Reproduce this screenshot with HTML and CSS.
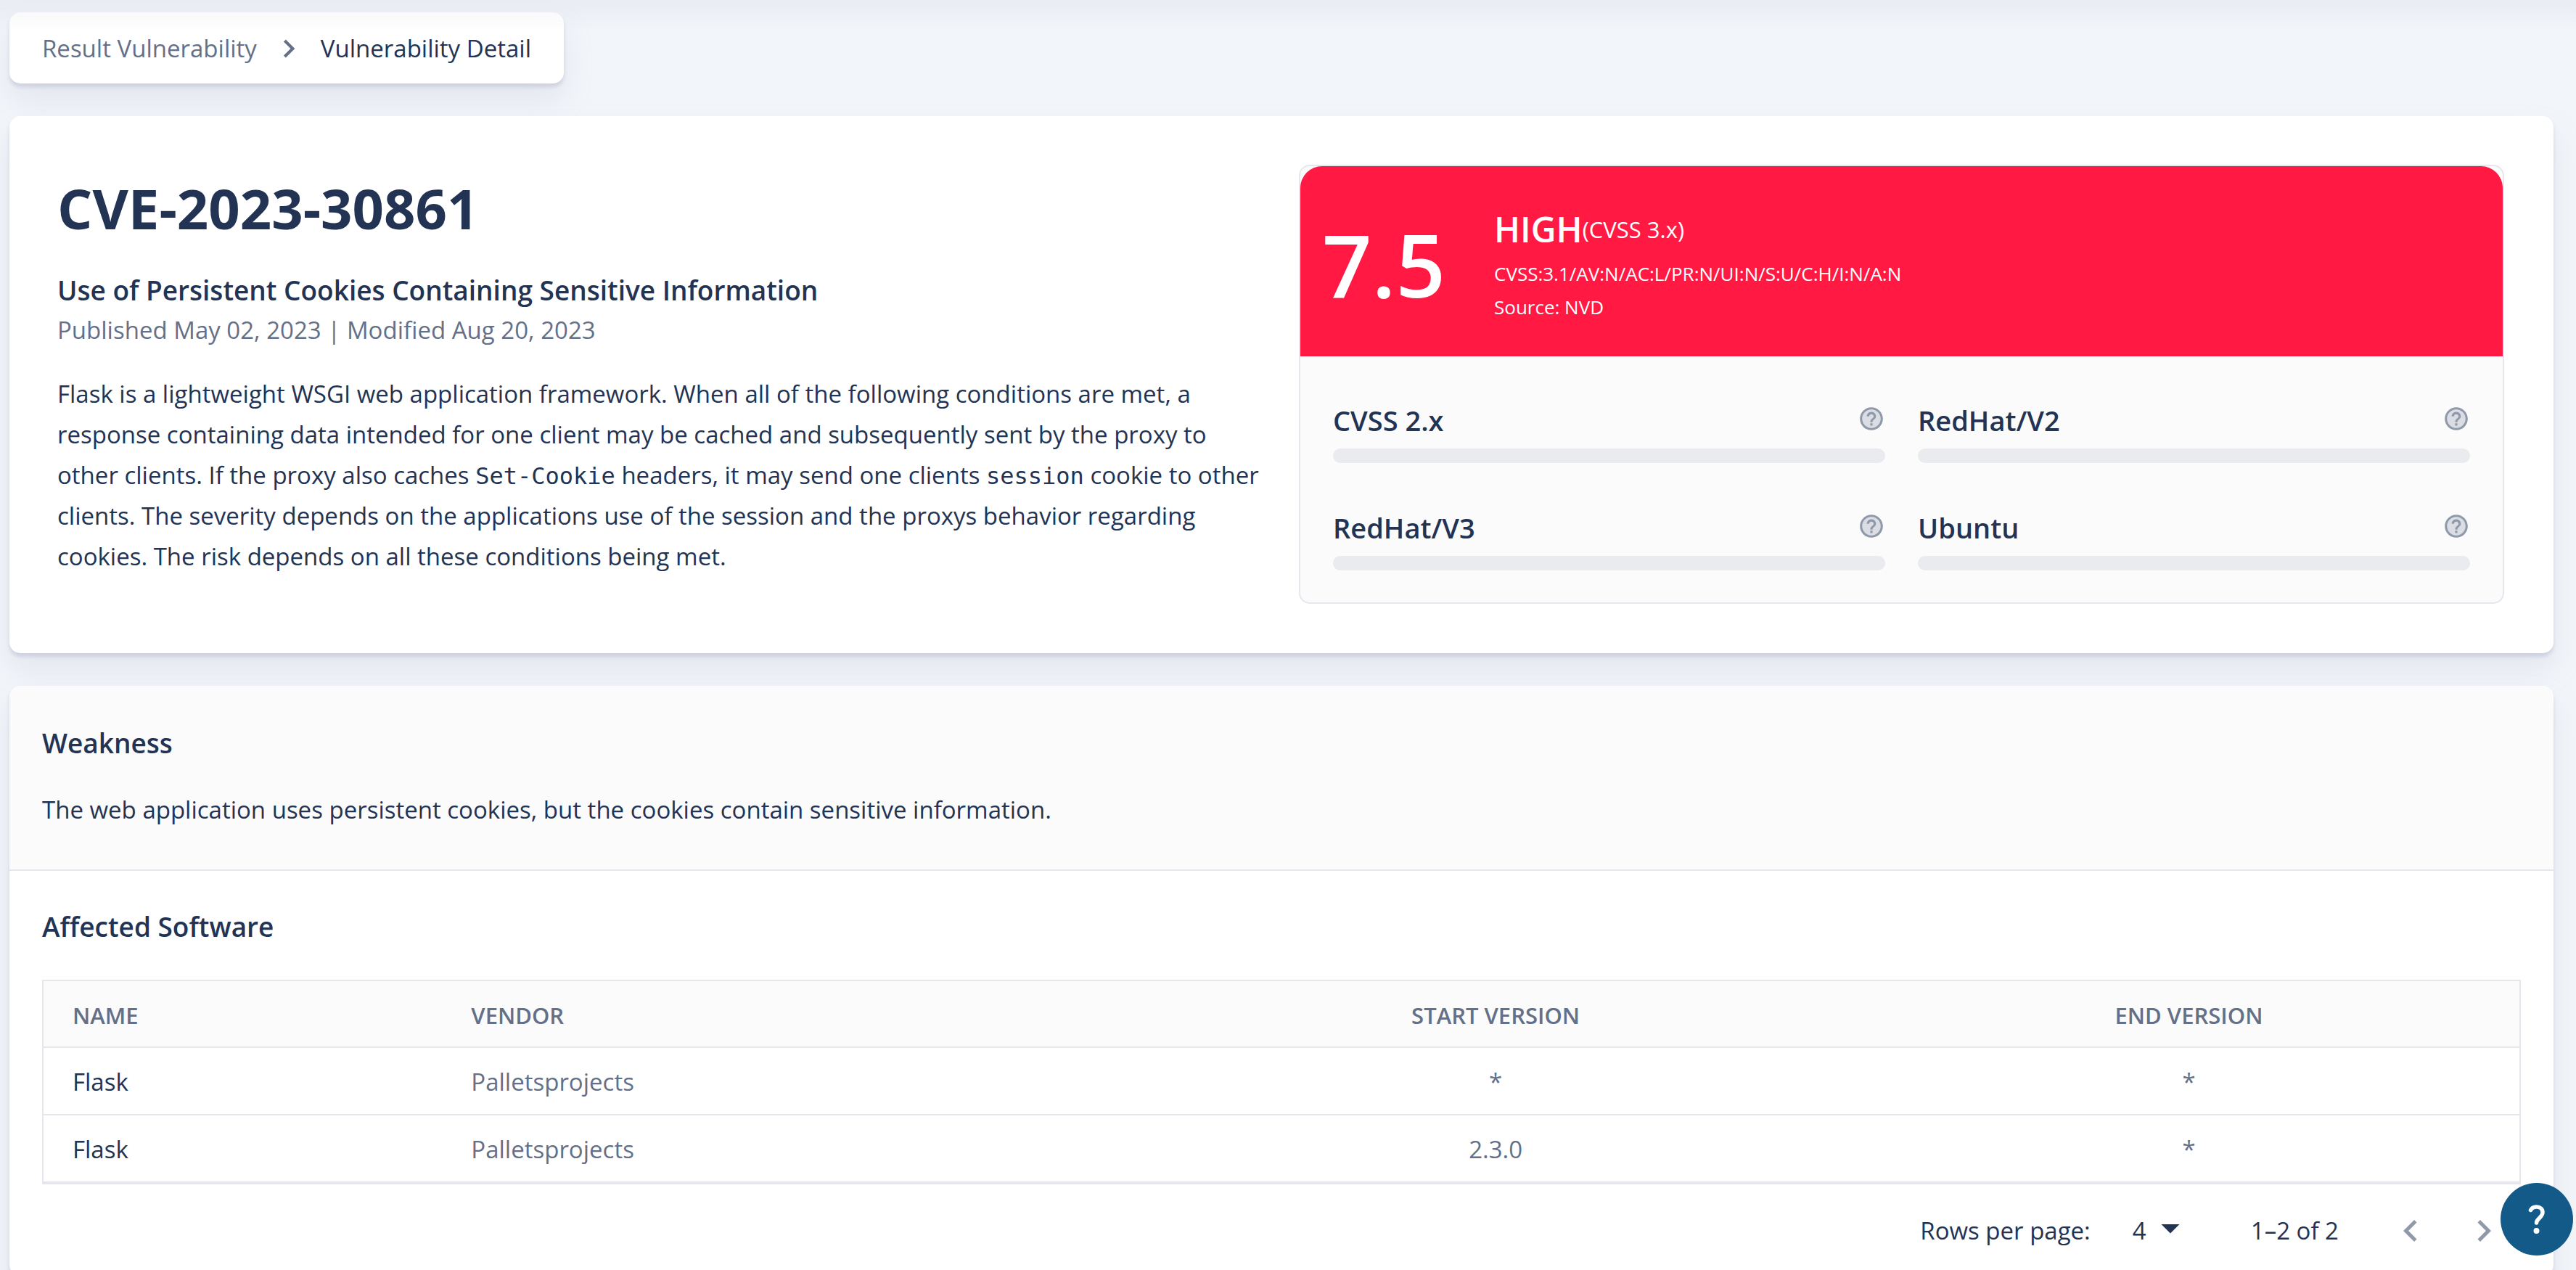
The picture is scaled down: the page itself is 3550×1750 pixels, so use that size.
FILE: index.html
```html
<!DOCTYPE html>
<html lang="en">
<head>
<meta charset="utf-8">
<meta name="viewport" content="width=device-width, initial-scale=1">
<title>Vulnerability Detail</title>
<link rel="stylesheet" href="styles.css">
</head>
<body>
<svg class="sprite" aria-hidden="true">
  <symbol id="chevron-right" viewBox="0 0 24 24"><path d="M10 6 8.59 7.41 13.17 12l-4.58 4.59L10 18l6-6z"/></symbol>
  <symbol id="chevron-left" viewBox="0 0 24 24"><path d="M15.41 16.59 10.83 12l4.58-4.59L14 6l-6 6 6 6z"/></symbol>
  <symbol id="drop-down" viewBox="0 0 24 24"><path d="m7 10 5 5 5-5z"/></symbol>
  <symbol id="help" viewBox="0 0 24 24">
    <path opacity=".3" d="M12 4c-4.41 0-8 3.59-8 8s3.59 8 8 8 8-3.59 8-8-3.59-8-8-8z"/>
    <path d="M11 16h2v2h-2zm1-14C6.48 2 2 6.48 2 12s4.48 10 10 10 10-4.48 10-10S17.52 2 12 2zm0 18c-4.41 0-8-3.59-8-8s3.59-8 8-8 8 3.59 8 8-3.59 8-8 8zm0-14c-2.21 0-4 1.79-4 4h2c0-1.1.9-2 2-2s2 .9 2 2c0 2-3 1.75-3 5h2c0-2.25 3-2.5 3-5 0-2.21-1.79-4-4-4z"/>
  </symbol>
</svg>

<div class="topbar-shade"></div>

<main class="page">
  <nav class="breadcrumb card" aria-label="Breadcrumb">
    <a class="breadcrumb-link" href="#results">Result Vulnerability</a>
    <svg class="breadcrumb-icon" aria-hidden="true"><use href="#chevron-right"/></svg>
    <span class="breadcrumb-current" aria-current="page">Vulnerability Detail</span>
  </nav>

  <section class="overview card">
    <div class="summary">
      <h1 class="cve">CVE-2023-30861</h1>
      <h2 class="heading">Use of Persistent Cookies Containing Sensitive Information</h2>
      <p class="dates">Published May 02, 2023 | Modified Aug 20, 2023</p>
      <p class="description">Flask is a lightweight WSGI web application framework. When all of the following conditions are met, a response containing data intended for one client may be cached and subsequently sent by the proxy to other clients. If the proxy also caches <code>Set-Cookie</code> headers, it may send one clients <code>session</code> cookie to other clients. The severity depends on the applications use of the session and the proxys behavior regarding cookies. The risk depends on all these conditions being met.</p>
    </div>

    <div class="scores">
      <div class="banner">
        <div class="banner-score">7.5</div>
        <div class="banner-info">
          <div class="banner-level"><strong class="level">HIGH</strong><span class="version">(CVSS 3.x)</span></div>
          <div class="banner-line">CVSS:3.1/AV:N/AC:L/PR:N/UI:N/S:U/C:H/I:N/A:N</div>
          <div class="banner-line">Source: NVD</div>
        </div>
      </div>
      <div class="score-grid">
        <div class="score">
          <div class="score-head"><h3 class="score-name">CVSS 2.x</h3><svg class="score-help" aria-hidden="true"><use href="#help"/></svg></div>
          <div class="score-bar" role="progressbar" aria-label="CVSS 2.x"></div>
        </div>
        <div class="score">
          <div class="score-head"><h3 class="score-name">RedHat/V2</h3><svg class="score-help" aria-hidden="true"><use href="#help"/></svg></div>
          <div class="score-bar" role="progressbar" aria-label="RedHat/V2"></div>
        </div>
        <div class="score">
          <div class="score-head"><h3 class="score-name">RedHat/V3</h3><svg class="score-help" aria-hidden="true"><use href="#help"/></svg></div>
          <div class="score-bar" role="progressbar" aria-label="RedHat/V3"></div>
        </div>
        <div class="score">
          <div class="score-head"><h3 class="score-name">Ubuntu</h3><svg class="score-help" aria-hidden="true"><use href="#help"/></svg></div>
          <div class="score-bar" role="progressbar" aria-label="Ubuntu"></div>
        </div>
      </div>
    </div>
  </section>

  <div class="details card">
    <section class="weakness">
      <h2 class="section-title">Weakness</h2>
      <p class="weakness-text">The web application uses persistent cookies, but the cookies contain sensitive information.</p>
    </section>
    <section class="affected">
      <h2 class="section-title">Affected Software</h2>
      <table class="software">
        <colgroup><col class="col-name"><col class="col-vendor"><col class="col-start"><col class="col-end"></colgroup>
        <thead>
          <tr><th scope="col">NAME</th><th scope="col">VENDOR</th><th scope="col" class="center">START VERSION</th><th scope="col" class="center">END VERSION</th></tr>
        </thead>
        <tbody>
          <tr><td class="name">Flask</td><td>Palletsprojects</td><td class="center">*</td><td class="center">*</td></tr>
          <tr><td class="name">Flask</td><td>Palletsprojects</td><td class="center">2.3.0</td><td class="center">*</td></tr>
        </tbody>
      </table>
      <div class="pagination">
        <label for="rows">Rows per page:</label>
        <div class="rows-select">
          <select id="rows"><option>4</option><option>8</option></select>
          <svg class="rows-icon" aria-hidden="true"><use href="#drop-down"/></svg>
        </div>
        <span class="range">1–2 of 2</span>
        <button class="page-button" type="button" aria-label="Previous page"><svg><use href="#chevron-left"/></svg></button>
        <button class="page-button" type="button" aria-label="Next page"><svg><use href="#chevron-right"/></svg></button>
      </div>
    </section>
  </div>
</main>

<button class="help-button" type="button" aria-label="Help">
  <svg viewBox="0 0 24 40" aria-hidden="true">
    <path d="M3.500 7.500C5 4.500 8 3 11.500 3c5 0 8.500 3 8.500 7.500 0 3.500-2 5.500-4.500 8S11.500 22 11.500 25" fill="none" stroke="currentColor" stroke-width="5.500" stroke-linecap="round"/>
    <circle cx="11.500" cy="36" r="4" fill="currentColor"/>
  </svg>
</button>
</body>
</html>
```
FILE: styles.css
```css
:root {
  --text: #223354;
  --text-soft: #647087;
  --icon: #9099a9;
  --line: #e6e7ed;
  --tint: #fbfbfc;
  --error: #ff1943;
}

* {
  box-sizing: border-box;
}

body {
  margin: 0;
  background: #f2f5f9;
  color: var(--text);
  font: 400 33px/56px "Open Sans", "Noto Sans", sans-serif;
}

h1, h2, h3, p {
  margin: 0;
}

svg {
  display: block;
  fill: currentColor;
}

.sprite {
  position: absolute;
  width: 0;
  height: 0;
}

/* Soft edge cast by the bar above the scrolling area */
.topbar-shade {
  position: fixed;
  top: 0;
  left: 0;
  right: 0;
  height: 44px;
  z-index: 1;
  pointer-events: none;
  background: linear-gradient(rgba(159, 162, 191, 0.1), rgba(159, 162, 191, 0));
}

.page {
  height: 100vh;
  padding: 17px 31px 0 13px;
  display: flex;
  flex-direction: column;
  gap: 45px;
  overflow: hidden auto;
  scrollbar-width: none;
}

.page > * {
  flex-shrink: 0;
}

.card {
  background: #fff;
  border-radius: 15px;
  box-shadow: 0 22px 40px rgba(159, 162, 191, 0.18), 0 5px 5px rgba(159, 162, 191, 0.32);
}

.breadcrumb {
  align-self: flex-start;
  display: flex;
  align-items: center;
  gap: 19px;
  padding: 22px 45px 20px;
}

.breadcrumb-link {
  color: var(--text-soft);
  text-decoration: none;
}

.breadcrumb-icon {
  width: 50px;
  height: 50px;
  color: var(--text-soft);
}

.overview {
  display: grid;
  grid-template-columns: 1fr 1fr;
  gap: 50px;
  padding: 67px 68px 68px 66px;
}

.summary {
  padding-top: 14px;
}

.cve {
  font-size: 76px;
  line-height: 92px;
  font-weight: 700;
}

.heading {
  margin-top: 40px;
  font-size: 37px;
  line-height: 54px;
  font-weight: 600;
}

.dates {
  color: var(--text-soft);
}

.description {
  margin-top: 32px;
}

.description code {
  font: 32px/1 "DejaVu Sans Mono", "Liberation Mono", monospace;
}

.scores {
  align-self: start;
  border: 2px solid var(--line);
  border-radius: 15px;
  background: var(--tint);
}

.banner {
  display: flex;
  align-items: center;
  height: 262px;
  padding: 8px 30px 0;
  border-radius: 30px 30px 0 0;
  background: var(--error);
  color: #fff;
}

.banner-score {
  width: 237px;
  font-size: 120px;
  line-height: 160px;
  font-weight: 600;
}

.banner-level {
  display: flex;
  align-items: center;
  height: 68px;
  margin-bottom: 4px;
}

.level {
  font-size: 48px;
  font-weight: 600;
}

.version {
  font-size: 31px;
}

.banner-line {
  font-size: 26px;
  line-height: 46px;
}

.score-grid {
  display: grid;
  grid-template-columns: 1fr 1fr;
  gap: 59px 45px;
  padding: 58px 45px 44px;
}

.score-head {
  display: flex;
  align-items: center;
  justify-content: space-between;
  margin-bottom: 9px;
}

.score-name {
  font-size: 38px;
  line-height: 60px;
  font-weight: 600;
}

.score-help {
  width: 38px;
  height: 38px;
  margin-bottom: 5px;
  color: var(--icon);
}

.score-bar {
  height: 20px;
  border-radius: 10px;
  background: #e9ebee;
}

.weakness {
  padding: 47px 45px 54px;
  border-bottom: 2px solid var(--line);
  border-radius: 15px 15px 0 0;
  background: var(--tint);
}

.section-title {
  font-size: 37px;
  line-height: 64px;
  font-weight: 600;
}

.weakness-text {
  margin-top: 32px;
}

.affected {
  padding: 45px 45px 0;
}

.software {
  width: 100%;
  margin-top: 41px;
  table-layout: fixed;
  border: 2px solid var(--line);
  border-collapse: separate;
  border-spacing: 0;
  color: var(--text-soft);
}

.col-name { width: 16.1%; }
.col-vendor { width: 27.9%; }
.col-start { width: 29.3%; }
.col-end { width: 26.7%; }

.software th,
.software td {
  height: 93px;
  padding: 3px 40px 0;
  border-bottom: 2px solid var(--line);
  text-align: left;
}

.software th {
  height: 92px;
  background: var(--tint);
  font-size: 31px;
  font-weight: 600;
}

.software .center {
  text-align: center;
}

.software .name {
  color: var(--text);
}

.pagination {
  display: flex;
  align-items: center;
  justify-content: flex-end;
  height: 126px;
  padding-top: 2px;
}

.rows-select {
  position: relative;
  margin: 0 79px 0 58px;
}

.rows-select select {
  appearance: none;
  width: 84px;
  padding: 0;
  border: 0;
  background: none;
  color: inherit;
  font: inherit;
}

.rows-icon {
  position: absolute;
  top: -6px;
  right: 2px;
  width: 60px;
  height: 60px;
  pointer-events: none;
}

.range {
  margin-right: 49px;
}

.page-button {
  width: 101px;
  padding: 20px;
  border: 0;
  background: none;
  color: var(--icon);
}

.page-button svg {
  width: 60px;
  height: 60px;
}

.help-button {
  position: fixed;
  right: 4px;
  bottom: 20px;
  z-index: 2;
  display: grid;
  place-items: center;
  width: 100px;
  height: 100px;
  padding: 0;
  border: 0;
  border-radius: 50%;
  background: #135a89;
  color: #fff;
}

.help-button svg {
  width: 24px;
  height: 40px;
}
```
